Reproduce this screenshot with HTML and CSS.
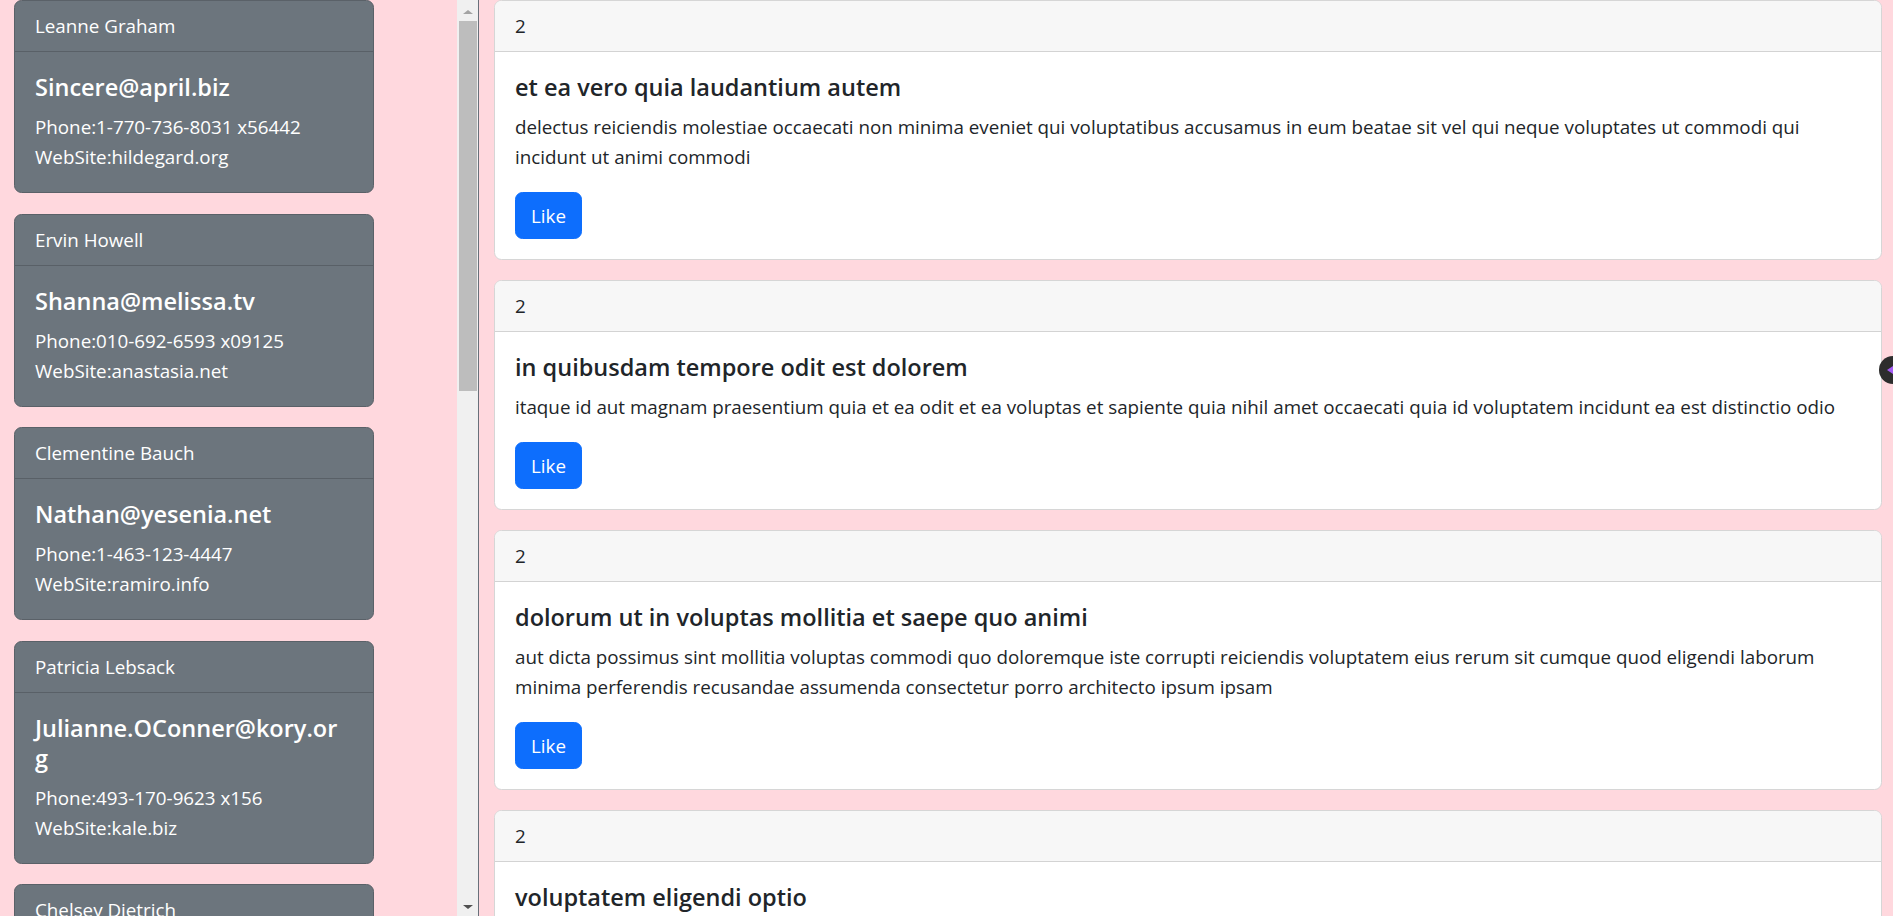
FILE: index.html
```html
<!DOCTYPE html>
<html lang="en">
<head>
<meta charset="utf-8">
<title>Users and Posts</title>
<link rel="stylesheet" href="styles.css">
</head>
<body>
<div class="layout">
  <div class="sidebar">
    <aside class="users">
      <div class="user-card"><div class="user-head">Leanne Graham</div><div class="user-body"><h5 class="user-mail">Sincere@april.biz</h5><p class="user-line">Phone:1-770-736-8031 x56442</p><p class="user-line">WebSite:hildegard.org</p></div></div>
      <div class="user-card"><div class="user-head">Ervin Howell</div><div class="user-body"><h5 class="user-mail">Shanna@melissa.tv</h5><p class="user-line">Phone:010-692-6593 x09125</p><p class="user-line">WebSite:anastasia.net</p></div></div>
      <div class="user-card"><div class="user-head">Clementine Bauch</div><div class="user-body"><h5 class="user-mail">Nathan@yesenia.net</h5><p class="user-line">Phone:1-463-123-4447</p><p class="user-line">WebSite:ramiro.info</p></div></div>
      <div class="user-card"><div class="user-head">Patricia Lebsack</div><div class="user-body"><h5 class="user-mail">Julianne.OConner@kory.org</h5><p class="user-line">Phone:493-170-9623 x156</p><p class="user-line">WebSite:kale.biz</p></div></div>
      <div class="user-card"><div class="user-head">Chelsey Dietrich</div><div class="user-body"><h5 class="user-mail">Lucio_Hettinger@annie.ca</h5><p class="user-line">Phone:(254)954-1289</p><p class="user-line">WebSite:demarco.info</p></div></div>
      <div class="user-card"><div class="user-head">Mrs. Dennis Schulist</div><div class="user-body"><h5 class="user-mail">Karley_Dach@jasper.info</h5><p class="user-line">Phone:1-477-935-8478 x6430</p><p class="user-line">WebSite:ola.org</p></div></div>
      <div class="user-card"><div class="user-head">Kurtis Weissnat</div><div class="user-body"><h5 class="user-mail">Telly.Hoeger@billy.biz</h5><p class="user-line">Phone:210.067.6132</p><p class="user-line">WebSite:elvis.io</p></div></div>
      <div class="user-card"><div class="user-head">Nicholas Runolfsdottir V</div><div class="user-body"><h5 class="user-mail">Sherwood@rosamond.me</h5><p class="user-line">Phone:586.493.6943 x140</p><p class="user-line">WebSite:jacynthe.com</p></div></div>
      <div class="user-card"><div class="user-head">Glenna Reichert</div><div class="user-body"><h5 class="user-mail">Chaim_McDermott@dana.io</h5><p class="user-line">Phone:(775)976-6794 x41206</p><p class="user-line">WebSite:conrad.com</p></div></div>
      <div class="user-card"><div class="user-head">Clementina DuBuque</div><div class="user-body"><h5 class="user-mail">Rey.Padberg@karina.biz</h5><p class="user-line">Phone:024-648-3804</p><p class="user-line">WebSite:ambrose.net</p></div></div>
    </aside>
    <div class="scrollbar" aria-hidden="true">
      <div class="sb-btn sb-up"></div>
      <div class="sb-track"><div class="sb-thumb"></div></div>
      <div class="sb-btn sb-down"></div>
    </div>
  </div>
  <main class="posts">
    <div class="post-card"><div class="post-head">2</div><div class="post-body"><h5 class="post-title">et ea vero quia laudantium autem</h5><p class="post-text">delectus reiciendis molestiae occaecati non minima eveniet qui voluptatibus accusamus in eum beatae sit vel qui neque voluptates ut commodi qui incidunt ut animi commodi</p><button class="like-btn" type="button">Like</button></div></div>
    <div class="post-card"><div class="post-head">2</div><div class="post-body"><h5 class="post-title">in quibusdam tempore odit est dolorem</h5><p class="post-text">itaque id aut magnam praesentium quia et ea odit et ea voluptas et sapiente quia nihil amet occaecati quia id voluptatem incidunt ea est distinctio odio</p><button class="like-btn" type="button">Like</button></div></div>
    <div class="post-card"><div class="post-head">2</div><div class="post-body"><h5 class="post-title">dolorum ut in voluptas mollitia et saepe quo animi</h5><p class="post-text">aut dicta possimus sint mollitia voluptas commodi quo doloremque iste corrupti reiciendis voluptatem eius rerum sit cumque quod eligendi laborum minima perferendis recusandae assumenda consectetur porro architecto ipsum ipsam</p><button class="like-btn" type="button">Like</button></div></div>
    <div class="post-card"><div class="post-head">2</div><div class="post-body"><h5 class="post-title">voluptatem eligendi optio</h5><p class="post-text">fuga et accusamus dolorum perferendis illo voluptas non doloremque neque facere ad qui dolorum molestiae beatae sed aut voluptas totam sit illum</p><button class="like-btn" type="button">Like</button></div></div>
  </main>
</div>
<div class="float-tab" aria-hidden="true"></div>
</body>
</html>
```
FILE: styles.css
```css
html, body {
  margin: 0;
  padding: 0;
  height: 100%;
  overflow: hidden;
}
body {
  background: #ffd8de;
  font-family: "Open Sans", "Noto Sans", sans-serif;
  font-size: 18.8px;
  line-height: 30px;
  color: #212529;
}
.layout {
  display: flex;
  height: 100vh;
}
.sidebar {
  flex: none;
  width: 479px;
  box-sizing: border-box;
  height: 100%;
  display: flex;
  border-right: 1px solid #68707a;
}
.users {
  flex: 1;
  min-width: 0;
  overflow: hidden;
  padding-left: 14px;
}
.scrollbar {
  flex: none;
  width: 21px;
  display: flex;
  flex-direction: column;
  background: #f0f0f0;
}
.sb-btn {
  flex: none;
  height: 21px;
  display: flex;
  align-items: center;
  justify-content: center;
}
.sb-up::before {
  content: "";
  margin-top: 2px;
  border-left: 5px solid transparent;
  border-right: 5px solid transparent;
  border-bottom: 4px solid #a3a3a3;
}
.sb-down::before {
  content: "";
  margin-top: 2px;
  border-left: 5px solid transparent;
  border-right: 5px solid transparent;
  border-top: 4px solid #505050;
}
.sb-track {
  flex: 1;
  padding: 0 1px 0 2px;
}
.sb-thumb {
  height: 370px;
  background: #bdbdbd;
}
.user-card {
  width: 360px;
  box-sizing: border-box;
  background: #6c757d;
  color: #fff;
  border: 1px solid #5a6168;
  border-radius: 7.5px;
  margin-bottom: 20.5px;
}
.user-head {
  padding: 10px 20px;
  border-bottom: 1px solid #596067;
}
.user-body {
  padding: 20px;
}
.user-mail {
  max-width: 311px;
  margin: 0 0 10px;
  font-size: 23.5px;
  line-height: 30px;
  font-weight: 600;
  overflow-wrap: anywhere;
}
.user-line {
  margin: 0;
}
.posts {
  flex: 1;
  min-width: 0;
  padding: 0 11px 0 15px;
  overflow: hidden;
}
.post-card {
  background: #fff;
  border: 1px solid #d6d6d6;
  border-radius: 7.5px;
  margin-bottom: 20px;
  overflow: hidden;
}
.post-head {
  background: #f7f7f7;
  padding: 10px 20px;
  border-bottom: 1px solid #d3d3d3;
}
.post-body {
  padding: 20px;
}
.post-title {
  margin: 0 0 10px;
  font-size: 23.5px;
  line-height: 30px;
  font-weight: 600;
}
.post-text {
  margin: 0 0 20px;
}
.like-btn {
  display: block;
  font-family: inherit;
  font-size: 18.8px;
  line-height: 30px;
  padding: 7.5px 15px;
  color: #fff;
  background: #0d6efd;
  border: 1px solid #0d6efd;
  border-radius: 7.5px;
  cursor: pointer;
}
.float-tab {
  position: fixed;
  right: -14px;
  top: 356px;
  width: 28px;
  height: 28px;
  border-radius: 50%;
  background: #2d2d2d;
}
.float-tab::after {
  content: "";
  position: absolute;
  left: 8px;
  top: 10px;
  border-top: 4px solid transparent;
  border-bottom: 4px solid transparent;
  border-right: 6px solid #a55cf5;
}
```
